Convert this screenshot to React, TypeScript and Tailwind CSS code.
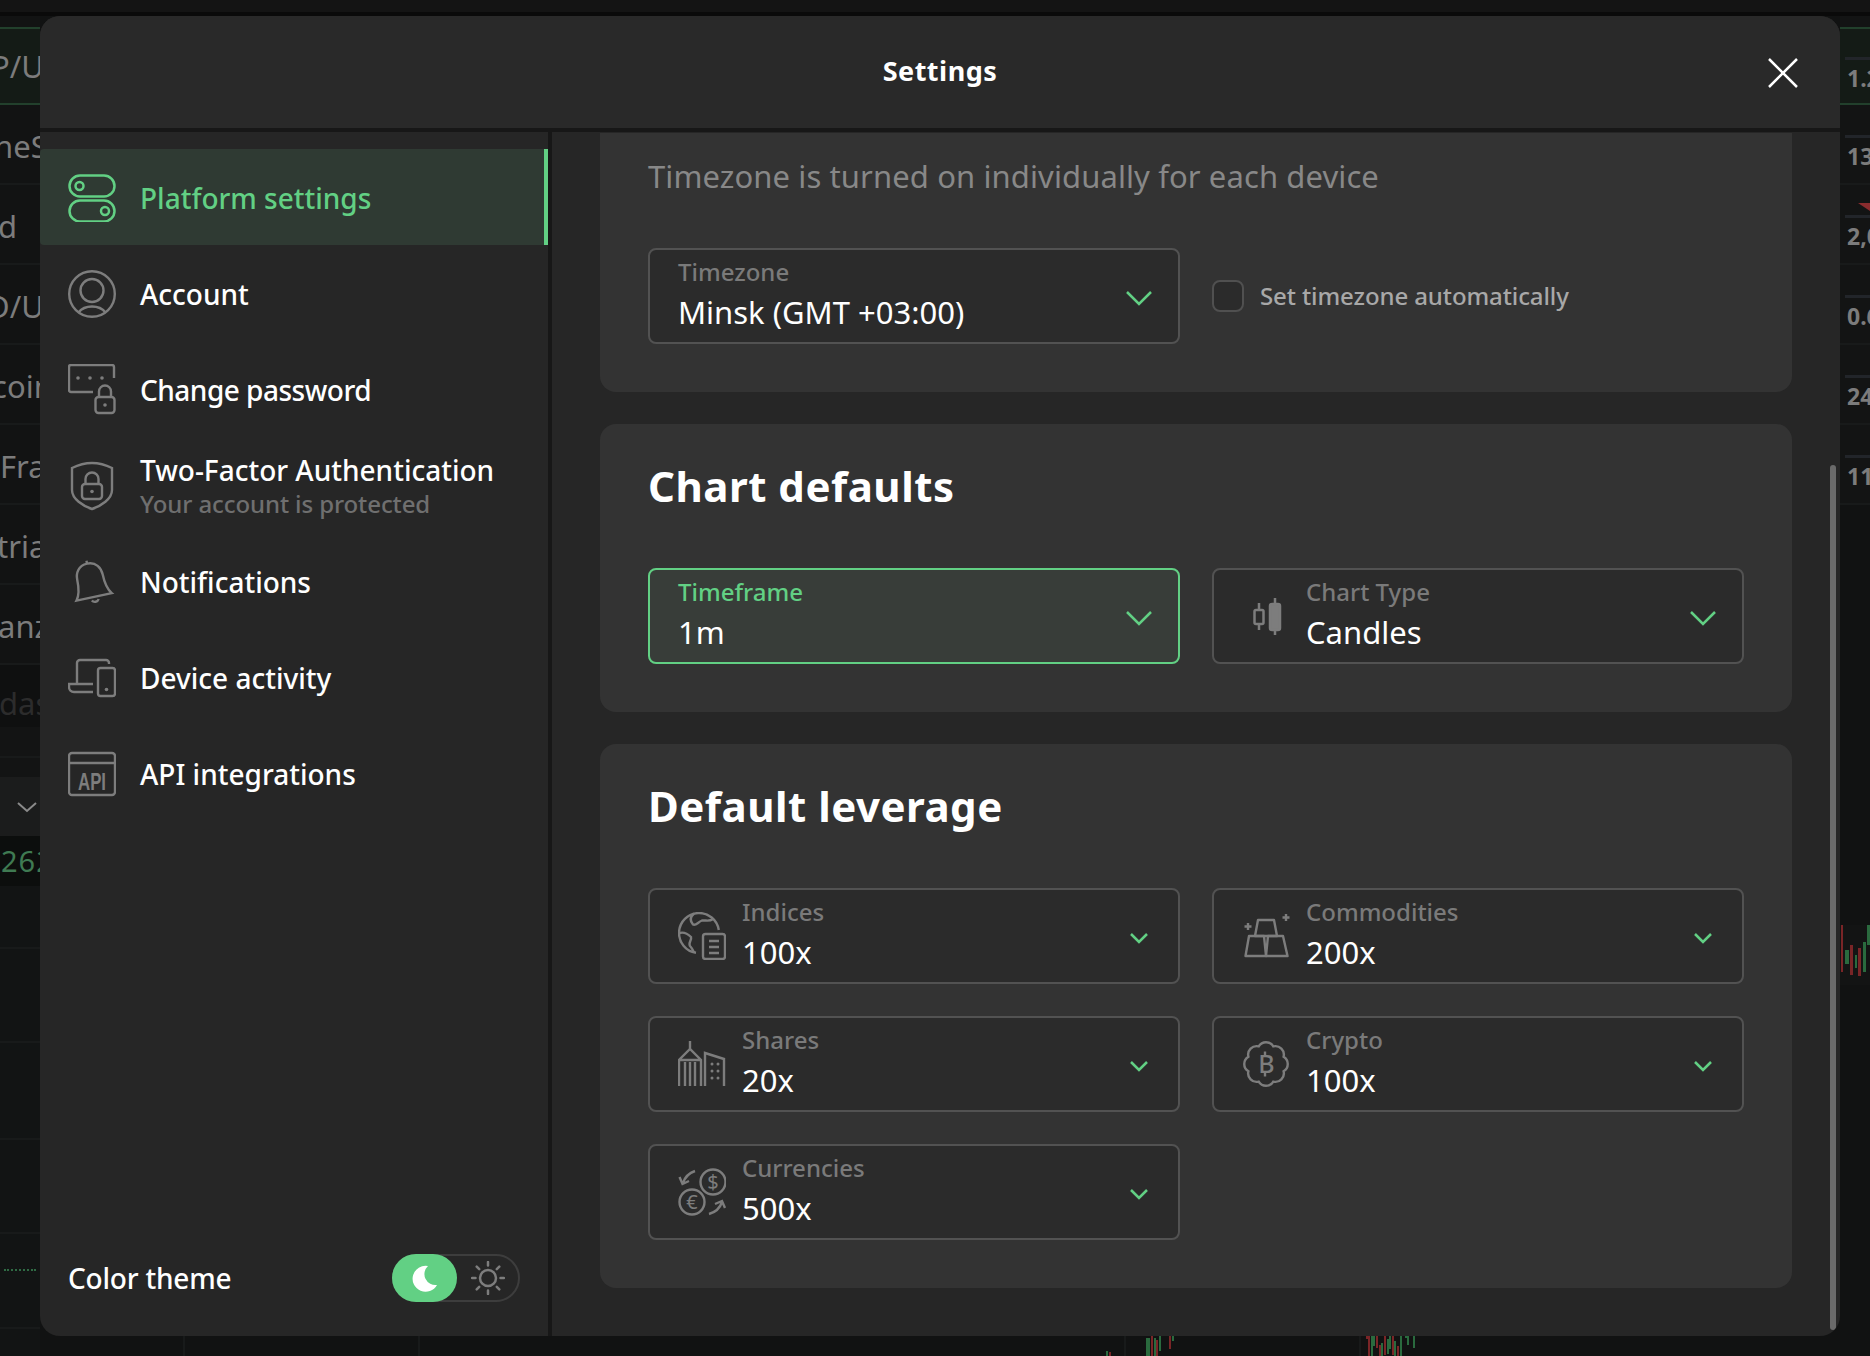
import React from "react";

const G = "#7d7d7d";
const SW = "2.4";

function IconToggle() {
  return (
    <svg width="48" height="48" viewBox="0 0 48 48" fill="none" stroke="#62d084" strokeWidth="2.500">
      <rect x="1.500" y="1.500" width="45" height="21" rx="10.500" />
      <rect x="1.500" y="26.500" width="45" height="21" rx="10.500" />
      <circle cx="11.500" cy="12" r="4" />
      <circle cx="37" cy="37" r="4" />
    </svg>
  );
}
function IconAccount() {
  return (
    <svg width="48" height="52" viewBox="0 0 48 52" fill="none" stroke={G} strokeWidth={SW}>
      <circle cx="24" cy="26" r="22.800" />
      <circle cx="24" cy="22.500" r="11.500" />
      <path d="M10.500 44.500C14 40 19 38.500 24 38.500S34 40 37.500 44.500" />
    </svg>
  );
}
function IconPassword() {
  return (
    <svg width="48" height="52" viewBox="0 0 48 52" fill="none" stroke={G} strokeWidth={SW}>
      <path d="M25 28H3a2 2 0 0 1-2-2V3a2 2 0 0 1 2-2h41a2 2 0 0 1 2 2v11" />
      <circle cx="10" cy="14" r="1.800" fill={G} stroke="none" />
      <circle cx="22" cy="14" r="1.800" fill={G} stroke="none" />
      <circle cx="34" cy="14" r="1.800" fill={G} stroke="none" />
      <rect x="27.500" y="33" width="19" height="16" rx="3" />
      <path d="M31 33v-5.500a6 6 0 0 1 12 0V33" />
      <circle cx="37" cy="41" r="1.800" fill={G} stroke="none" />
    </svg>
  );
}
function IconShield() {
  return (
    <svg width="48" height="52" viewBox="0 0 48 52" fill="none" stroke={G} strokeWidth={SW}>
      <path d="M24 3C31 3 38 5 44 8V30C44 39 33 46 24 49C15 46 4 39 4 30V8C10 5 17 3 24 3Z" />
      <rect x="14" y="24" width="20" height="15" rx="3" />
      <path d="M17.500 24v-5a6.500 6.500 0 0 1 13 0v5" />
      <circle cx="24" cy="31.500" r="1.800" fill={G} stroke="none" />
    </svg>
  );
}
function IconBell() {
  return (
    <svg width="48" height="48" viewBox="0 0 48 48" fill="none" stroke={G} strokeWidth={SW}>
      <g transform="rotate(-12 24 24)">
        <path d="M23 5C14 5 10 12 10 19C10 28 9 34 5 39H41C37 34 36 28 36 19C36 12 32 5 23 5Z" />
        <path d="M23 5V2" />
        <path d="M20 42a4 4 0 0 0 7 0" />
      </g>
    </svg>
  );
}
function IconDevice() {
  return (
    <svg width="48" height="48" viewBox="0 0 48 48" fill="none" stroke={G} strokeWidth={SW}>
      <path d="M41 10V9a3 3 0 0 0-3-3H12a3 3 0 0 0-3 3v21" />
      <path d="M25 30H1v3a5 5 0 0 0 5 5h19" />
      <rect x="30" y="14" width="17" height="28" rx="2.500" />
      <circle cx="38.500" cy="35.500" r="1.800" fill={G} stroke="none" />
    </svg>
  );
}
function IconApi() {
  return (
    <svg width="48" height="48" viewBox="0 0 48 48" fill="none" stroke={G} strokeWidth={SW}>
      <rect x="1" y="3" width="46" height="42" rx="3" />
      <path d="M1 13H47" />
      <text x="24" y="39.500" textAnchor="middle" fontSize="24" fontWeight="700" fontFamily="'Liberation Sans', sans-serif" textLength="28" lengthAdjust="spacingAndGlyphs" fill={G} stroke="none">API</text>
    </svg>
  );
}
function IconCandles() {
  return (
    <svg width="48" height="48" viewBox="0 0 48 48" fill="none" stroke={G} strokeWidth="2.500">
      <path d="M17 11V38" />
      <rect x="12.500" y="18" width="9" height="14" rx="1.500" fill="#2b2b2b" />
      <path d="M33 6V43" />
      <rect x="28" y="12" width="10" height="26" rx="2" fill={G} />
    </svg>
  );
}
function IconIndices() {
  return (
    <svg width="48" height="48" viewBox="0 0 48 48" fill="none" stroke={G} strokeWidth={SW}>
      <path d="M40.800 18A20 20 0 1 0 18 40.800" />
      <path d="M16 1.500C12 5 12 9 15 12.500C18 14 20 10 24 8.500C28 8 31 10 35 7" />
      <path d="M1.500 21C5 20 9 21 13 25C14 28 10 31 12 34C14 36 15 38 16 40.500" />
      <rect x="25" y="22" width="22" height="25" rx="2.500" />
      <path d="M31 29H41M31 35H41M31 41H41" />
    </svg>
  );
}
function IconCommodities() {
  return (
    <svg width="48" height="48" viewBox="0 0 48 48" fill="none" stroke={G} strokeWidth={SW}>
      <path d="M16 8H32L35 24H13Z" strokeLinejoin="round" />
      <path d="M7 24H22L24 44H3.500Z" strokeLinejoin="round" />
      <path d="M26 24H41L45.500 44H24Z" strokeLinejoin="round" />
      <path d="M6 11V18M2.500 14.500H9.500" />
      <path d="M44 2V9M40.500 5.500H47.500" />
    </svg>
  );
}
function IconShares() {
  return (
    <svg width="48" height="48" viewBox="0 0 48 48" fill="none" stroke={G} strokeWidth={SW}>
      <path d="M1 46V20L12 9L23 20V46M12 9V1M1 20H23M7 22V46M12 22V46M17 22V46" />
      <path d="M27 46V13L46 19V46" />
      <path d="M34 24h.01M40 24h.01M34 31h.01M40 31h.01M34 38h.01M40 38h.01" strokeWidth="3" strokeLinecap="round" />
    </svg>
  );
}
function IconCrypto() {
  return (
    <svg width="48" height="48" viewBox="0 0 48 48" fill="none" stroke={G} strokeWidth={SW}>
      <path d="M16.700 6.400A8.500 8.500 0 0 1 31.300 6.400A8.500 8.500 0 0 1 41.600 16.700A8.500 8.500 0 0 1 41.600 31.300A8.500 8.500 0 0 1 31.300 41.600A8.500 8.500 0 0 1 16.700 41.600A8.500 8.500 0 0 1 6.400 31.300A8.500 8.500 0 0 1 6.400 16.700A8.500 8.500 0 0 1 16.700 6.400Z" />
      <text x="24.500" y="33" textAnchor="middle" fontSize="25" fontWeight="500" fontFamily="'Noto Sans', sans-serif" fill={G} stroke="none">B</text>
      <path d="M23 11.500V15M23 33V36.500" />
    </svg>
  );
}
function IconCurrencies() {
  return (
    <svg width="48" height="48" viewBox="0 0 48 48" fill="none" stroke={G} strokeWidth={SW}>
      <circle cx="35" cy="14" r="12.500" />
      <circle cx="14" cy="34" r="12.500" />
      <text x="35" y="21" textAnchor="middle" fontSize="20" fontFamily="'Noto Sans', sans-serif" fill={G} stroke="none">$</text>
      <text x="14" y="41" textAnchor="middle" fontSize="20" fontFamily="'Noto Sans', sans-serif" fill={G} stroke="none">€</text>
      <path d="M17 3C11 5 7 9 5 15M1.500 9L4.500 16L11 13" />
      <path d="M31 46C38 44 42 40 44 34M37 36L44 33L47 40" />
    </svg>
  );
}
function Chevron({ big }: { big?: boolean }) {
  return big ? (
    <svg width="28" height="18" viewBox="0 0 28 18" fill="none" stroke="#62d084" strokeWidth="2.500">
      <path d="M2 3L14 15L26 3" />
    </svg>
  ) : (
    <svg width="20" height="14" viewBox="0 0 20 14" fill="none" stroke="#62d084" strokeWidth="2.500">
      <path d="M2 3L10 11L18 3" />
    </svg>
  );
}

function NavItem({ icon, title, sub, active, tight }: { icon: React.ReactNode; title: string; sub?: string; active?: boolean; tight?: boolean }) {
  return (
    <div
      className={
        active
          ? "h-[96px] flex items-center gap-[24px] pl-[28px] bg-[#2f3a33] border-r-4 border-[#62d084] rounded-l-[4px]"
          : "h-[96px] flex items-center gap-[24px] pl-[28px]"
      }
    >
      <div className="w-[48px] h-[52px] flex items-center justify-center shrink-0 mt-[1px]">{icon}</div>
      <div className="flex flex-col pt-[2px]">
        <span className={(active ? "text-[#62d084] " : "text-white ") + (tight ? "tracking-[-0.5px] " : "") + "text-[28px] leading-[36px] font-medium"}>{title}</span>
        {sub && <span className="text-[24px] leading-[32px] font-medium tracking-[-0.1px] text-[#6f6f6f]">{sub}</span>}
      </div>
    </div>
  );
}

function Select({ label, value, icon, big, active }: { label: string; value: string; icon?: React.ReactNode; big?: boolean; active?: boolean }) {
  return (
    <div
      className={
        active
          ? "h-[96px] rounded-[8px] border-2 border-[#62d084] bg-[#383d39] flex items-center pl-[28px] pr-[25px] gap-[16px]"
          : "h-[96px] rounded-[8px] border-2 border-[#525252] bg-[#2b2b2b] flex items-center pl-[28px] pr-[25px] gap-[16px]"
      }
    >
      {icon && <div className="w-[48px] h-[48px] shrink-0">{icon}</div>}
      <div className="flex-1 flex flex-col pb-[2px]">
        <span className={active ? "text-[24px] leading-[30px] font-medium text-[#62d084]" : "text-[24px] leading-[30px] font-medium text-[#7a7a7a]"}>{label}</span>
        <span className="text-[31px] leading-[42px] text-white mt-[4px]">{value}</span>
      </div>
      <div className="w-[28px] flex justify-center mt-[3px]">
        <Chevron big={big} />
      </div>
    </div>
  );
}

function BgLeft() {
  const Row = ({ t, c }: { t: string; c: string }) => (
    <div className="h-[80px] border-b-2 border-[#181a1a] flex items-center pt-[4px] overflow-hidden">
      <span className={c + " whitespace-nowrap text-[31px] text-[#7c7c7c]"}>{t}</span>
    </div>
  );
  return (
    <div className="w-[40px] shrink-0 overflow-hidden flex flex-col bg-[#121313]">
      <div className="h-[11px]" />
      <div className="h-[78px] bg-[#141b16] border-y-2 border-[#22402c] flex items-center overflow-hidden">
        <span className="-ml-[9px] whitespace-nowrap text-[31px] text-[#7c7c7c]">P/U</span>
      </div>
      <Row t="neS" c="-ml-[6px]" />
      <Row t="d" c="ml-[-2px]" />
      <Row t="D/U" c="-ml-[13px]" />
      <Row t="coin" c="-ml-[8px]" />
      <Row t="Fra" c="ml-[0px]" />
      <Row t="tria" c="-ml-[3px]" />
      <Row t="anz" c="-ml-[2px]" />
      <div className="h-[62px] bg-[#0f1010] flex items-center overflow-hidden">
        <span className="-ml-[1px] pt-[14px] whitespace-nowrap text-[31px] text-[#2c2c2c]">das</span>
      </div>
      <div className="h-[31px] bg-[#131414] border-b-2 border-[#181a1a]" />
      <div className="h-[19px] bg-[#131414]" />
      <div className="h-[59px] bg-[#1b1c1c] flex items-center justify-end pr-[3px]">
        <svg width="20" height="12" viewBox="0 0 20 12" fill="none" stroke="#8a8a8a" strokeWidth="2"><path d="M1 2L10 10L19 2" /></svg>
      </div>
      <div className="h-[50px] bg-[#0c0e0d] flex items-center overflow-hidden">
        <span className="ml-[1px] whitespace-nowrap text-[29px] tracking-[1px] text-[#3f7a52]">262</span>
      </div>
      <div className="h-[63px] border-b-2 border-[#181a1a] bg-[#121414]" />
      <div className="h-[94px] border-b-2 border-[#181a1a] bg-[#121414]" />
      <div className="h-[97px] border-b-2 border-[#181a1a] bg-[#121414]" />
      <div className="h-[94px] border-b-2 border-[#181a1a] bg-[#121414]" />
      <div className="h-[95px] border-b-2 border-[#181a1a] bg-[#121414] flex flex-col pl-[4px] pt-[35px]">
        <div className="w-[32px] border-b-2 border-dotted border-[#2f6b44]" />
      </div>
      <div className="flex-1 bg-[#121414]" />
    </div>
  );
}

function BgRight() {
  const Row = ({ t, tri }: { t: string; tri?: boolean }) => (
    <div className="relative h-[80px] border-b-2 border-[#181a1a] flex flex-col pl-[5px] pt-[30px] overflow-hidden">
      {tri && (
        <svg width="12" height="8" viewBox="0 0 12 8" className="absolute right-0 top-[18px]">
          <path d="M0 0H12V8Z" fill="#8a2c2e" />
        </svg>
      )}
      <div className="h-[3px] w-full bg-[#22252a]" />
      <span className="pl-[2px] whitespace-nowrap text-[23px] leading-[32px] mt-[2px] font-bold text-[#7c7c7c]">{t}</span>
    </div>
  );
  return (
    <div className="w-[30px] shrink-0 overflow-hidden flex flex-col bg-[#131414]">
      <div className="h-[11px]" />
      <div className="h-[78px] bg-[#141b16] border-y-2 border-[#22402c] flex flex-col pl-[5px] pt-[28px] overflow-hidden">
        <div className="h-[3px] w-full bg-[#22252a]" />
        <span className="pl-[2px] whitespace-nowrap text-[23px] leading-[32px] mt-[2px] font-bold text-[#7c7c7c]">1.2</span>
      </div>
      <Row t="13" />
      <Row t="2,0" tri />
      <Row t="0.6" />
      <Row t="24" />
      <Row t="11" />
      <div className="h-[420px] bg-[#111212]" />
      <svg width="30" height="60" viewBox="0 0 30 60" className="shrink-0">
        <rect x="1" y="0" width="2" height="47" fill="#7a2527" />
        <rect x="5" y="25" width="4" height="14" fill="#2a6a3e" />
        <rect x="10" y="20" width="3" height="30" fill="#7a2527" />
        <rect x="15" y="30" width="2" height="13" fill="#2a6a3e" />
        <rect x="18" y="23" width="3" height="28" fill="#7a2527" />
        <rect x="23" y="17" width="3" height="30" fill="#2a6a3e" />
        <rect x="27" y="0" width="3" height="20" fill="#2a6a3e" />
      </svg>
      <div className="flex-1 bg-[#111212]" />
    </div>
  );
}

const candles: [number, number, number, string][] = [
  [1106, 1351, 1356, "g"], [1109, 1352, 1356, "r"], [1146, 1338, 1356, "g"], [1148, 1338, 1356, "g"],
  [1151, 1336, 1356, "r"], [1154, 1338, 1356, "g"], [1156, 1340, 1356, "r"], [1159, 1336, 1351, "g"],
  [1169, 1336, 1349, "r"], [1172, 1336, 1341, "g"], [1366, 1336, 1339, "r"], [1368, 1336, 1356, "r"],
  [1371, 1336, 1356, "g"], [1373, 1336, 1346, "g"], [1376, 1336, 1348, "r"], [1379, 1345, 1356, "r"],
  [1381, 1343, 1356, "g"], [1384, 1336, 1355, "r"], [1387, 1339, 1354, "g"], [1389, 1336, 1349, "g"],
  [1392, 1336, 1355, "r"], [1394, 1341, 1356, "g"], [1397, 1346, 1356, "r"], [1400, 1336, 1356, "g"],
  [1405, 1336, 1338, "g"], [1407, 1336, 1345, "g"], [1413, 1336, 1348, "g"],
];

export default function App() {
  return (
    <div className="relative w-full h-[1356px] overflow-hidden bg-[#111212] flex flex-col font-['Noto_Sans',sans-serif]">
      <div className="h-[16px] shrink-0 bg-[#141414] border-b-4 border-[#0a0a0a]" />
      <div className="flex-1 flex min-h-0">
        <BgLeft />
        <div className="flex-1 flex flex-col justify-end">
          <svg width="1800" height="20" viewBox="40 1336 1800 20" className="block">
            <path d="M184 1336V1356M419 1336V1356M1125 1336V1356M1360 1336V1356" stroke="#181a1a" strokeWidth="2" />
            {candles.map(([x, a, b, k], i) => (
              <rect key={i} x={x} y={a} width="2" height={b - a} fill={k === "g" ? "#2a6a3e" : "#7a2527"} />
            ))}
          </svg>
        </div>
        <BgRight />
      </div>

      <div className="absolute left-[40px] top-[16px] w-[1800px] h-[1320px] rounded-[20px] overflow-hidden bg-[#262626] flex flex-col">
        <div className="relative h-[112px] shrink-0 bg-[#292929] flex items-center justify-center pb-[2px]">
          <span className="text-[27px] font-bold tracking-[0.5px] text-white">Settings</span>
          <svg width="32" height="32" viewBox="0 0 32 32" className="absolute right-[41px] top-[41px]" fill="none" stroke="#ffffff" strokeWidth="2.500">
            <path d="M2 2L30 30M30 2L2 30" />
          </svg>
        </div>
        <div className="h-[4px] shrink-0 bg-[#171717]" />
        <div className="flex-1 flex min-h-0">
          <div className="w-[508px] shrink-0 flex flex-col pt-[17px]">
            <NavItem active icon={<IconToggle />} title="Platform settings" />
            <NavItem icon={<IconAccount />} title="Account" />
            <NavItem tight icon={<IconPassword />} title="Change password" />
            <NavItem icon={<IconShield />} title="Two-Factor Authentication" sub="Your account is protected" />
            <NavItem icon={<IconBell />} title="Notifications" />
            <NavItem icon={<IconDevice />} title="Device activity" />
            <NavItem icon={<IconApi />} title="API integrations" />
            <div className="mt-auto h-[99px] pl-[28px] pr-[28px] flex items-start justify-between">
              <span className="text-[28px] leading-[36px] mt-[23px] font-medium tracking-[-0.2px] text-white">Color theme</span>
              <div className="w-[128px] h-[48px] mt-[17px] rounded-full border-2 border-[#3d3d3d] relative">
                <div className="absolute -left-[2px] -top-[2px] w-[65px] h-[48px] rounded-full bg-[#62d084] flex items-center justify-center">
                  <svg width="28" height="28" viewBox="0 0 28 28"><path d="M17 2A13 13 0 1 0 26 21A11 11 0 0 1 17 2Z" fill="#ffffff" /></svg>
                </div>
                <div className="absolute right-[13px] top-[5px]">
                  <svg width="34" height="34" viewBox="0 0 34 34" fill="none" stroke={G} strokeWidth="2.500" strokeLinecap="round">
                    <circle cx="17" cy="17" r="8" />
                    <path d="M17 1V4.500M17 29.500V33M1 17H4.500M29.500 17H33M5.700 5.700L8.200 8.200M25.800 25.800L28.300 28.300M5.700 28.300L8.200 25.800M25.800 8.200L28.300 5.700" />
                  </svg>
                </div>
              </div>
            </div>
          </div>
          <div className="w-[4px] shrink-0 bg-[#171717]" />
          <div className="relative flex-1 pl-[48px] pr-[48px] flex flex-col gap-[32px]">
            <div className="bg-[#333333] rounded-b-[16px] px-[48px] pt-[23px] pb-[48px] mt-[1px]">
              <div className="text-[31px] leading-[40px] tracking-[0.1px] text-[#888888]">Timezone is turned on individually for each device</div>
              <div className="grid grid-cols-2 gap-[32px] mt-[52px]">
                <Select big label="Timezone" value="Minsk (GMT +03:00)" />
                <div className="flex items-center gap-[16px]">
                  <div className="w-[32px] h-[32px] rounded-[8px] border-2 border-[#505050] bg-[#2b2b2b]" />
                  <span className="text-[24px] font-medium tracking-[-0.1px] text-[#a8a8a8]">Set timezone automatically</span>
                </div>
              </div>
            </div>
            <div className="bg-[#333333] rounded-[16px] px-[48px] pt-[32px] pb-[48px]">
              <div className="text-[42px] leading-[60px] font-bold tracking-[0.5px] text-white">Chart defaults</div>
              <div className="grid grid-cols-2 gap-[32px] mt-[52px]">
                <Select active big label="Timeframe" value="1m" />
                <Select big label="Chart Type" value="Candles" icon={<IconCandles />} />
              </div>
            </div>
            <div className="bg-[#333333] rounded-[16px] px-[48px] pt-[32px] pb-[48px]">
              <div className="text-[42px] leading-[60px] font-bold tracking-[0.5px] text-white">Default leverage</div>
              <div className="grid grid-cols-2 gap-[32px] mt-[52px]">
                <Select label="Indices" value="100x" icon={<IconIndices />} />
                <Select label="Commodities" value="200x" icon={<IconCommodities />} />
                <Select label="Shares" value="20x" icon={<IconShares />} />
                <Select label="Crypto" value="100x" icon={<IconCrypto />} />
                <Select label="Currencies" value="500x" icon={<IconCurrencies />} />
              </div>
            </div>
            <div className="absolute right-[4px] top-[333px] bottom-[6px] w-[6px] rounded-full bg-[#6a6a6a]" />
          </div>
        </div>
      </div>
    </div>
  );
}
